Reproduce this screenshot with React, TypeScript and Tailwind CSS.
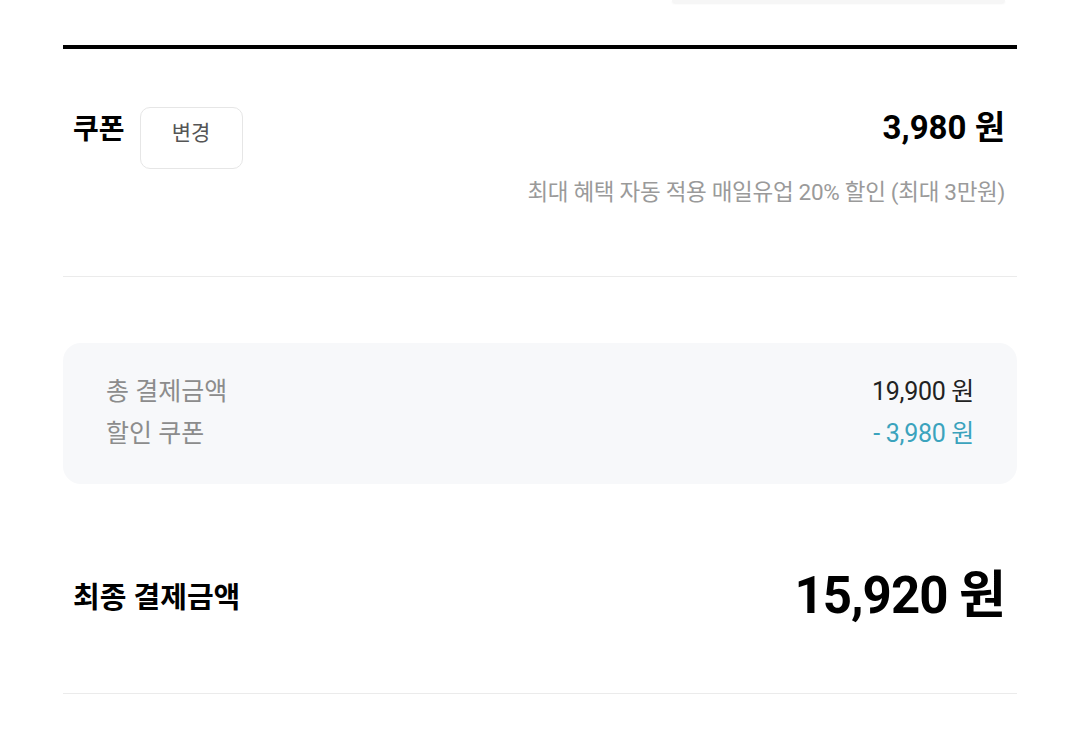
const font = "font-['Roboto','Noto_Sans_CJK_KR',sans-serif]";

// Payment summary: coupon row, totals card and final amount
function CouponRow() {
  return (
    <div className="flex items-start justify-between pl-[10px] pr-[12px] pt-[58px] pb-[70px]">
      <div className="flex items-start gap-[15px]">
        <span className="text-[28px] font-bold leading-[34px] mt-[6px] text-black">쿠폰</span>
        <button className="w-[103px] h-[62px] rounded-[10px] border border-[#e6e6e6] bg-white text-[21px] text-[#555] pb-[9px]">
          변경
        </button>
      </div>
      <div className="flex flex-col items-end">
        <span className="text-[33px] font-bold leading-[40px] mt-[1px] text-black">3,980 원</span>
        <span className="text-[22.5px] leading-[28px] mt-[30px] text-[#9a9a9a] tracking-[-0.3px]">
          최대 혜택 자동 적용 매일유업 20% 할인 (최대 3만원)
        </span>
      </div>
    </div>
  );
}

function SummaryCard() {
  return (
    <div className="rounded-[18px] bg-[#f7f8fa] px-[43px] pt-[33px] pb-[34px] flex flex-col gap-[10px] text-[25px] leading-[32px]">
      <div className="flex justify-between">
        <span className="text-[#8c8c8c]">총 결제금액</span>
        <span className="text-[#222] tracking-[-0.3px]">19,900 원</span>
      </div>
      <div className="flex justify-between">
        <span className="text-[#8c8c8c]">할인 쿠폰</span>
        <span className="text-[#3ba3bd] tracking-[-0.3px]">- 3,980 원</span>
      </div>
    </div>
  );
}

export default function App() {
  return (
    <div className={`${font} min-h-screen bg-white`}>
      <div className="mx-auto w-[954px]">
        <div className="flex justify-end pr-[12px]">
          <div className="w-[333px] h-[3px] rounded-b-[10px] bg-[#f6f6f6] shadow-[0_1px_2px_rgba(0,0,0,0.05)]" />
        </div>
        <div className="mt-[42px] h-[4px] bg-black" />
        <CouponRow />
        <div className="h-px bg-[#ebebeb]" />
        <div className="pt-[66px]">
          <SummaryCard />
        </div>
        <div className="flex items-center justify-between pl-[10px] pr-[12px] pt-[82px] pb-[67px]">
          <span className="text-[29px] font-bold leading-[36px] mt-[3px] text-black">최종 결제금액</span>
          <span className="text-[51px] font-bold leading-[60px] tracking-[-1px] text-black">15,920 원</span>
        </div>
        <div className="h-px bg-[#ebebeb]" />
      </div>
    </div>
  );
}
